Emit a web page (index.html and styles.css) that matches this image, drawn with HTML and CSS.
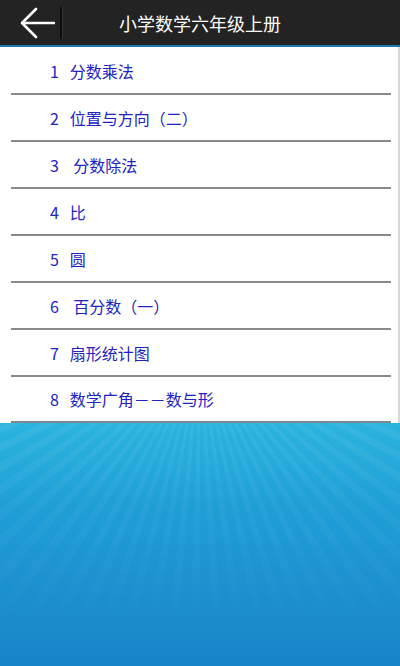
FILE: index.html
```html
<!DOCTYPE html>
<html lang="zh">
<head>
<meta charset="utf-8">
<link rel="stylesheet" href="styles.css">
</head>
<body>
<div class="app">
  <header class="bar">
    <div class="back">
      <svg width="36" height="32" viewBox="0 0 36 32"><path d="M17 2 L3 16 L17 30 M3 16 H35" fill="none" stroke="#fff" stroke-width="2.6" stroke-linecap="round" stroke-linejoin="round"/></svg>
    </div>
    <div class="sep"></div>
    <h1 class="title">小学数学六年级上册</h1>
  </header>
  <ul class="list">
    <li class="item">1   分数乘法</li>
    <li class="item">2   位置与方向（二）</li>
    <li class="item">3    分数除法</li>
    <li class="item">4   比</li>
    <li class="item">5   圆</li>
    <li class="item">6    百分数（一）</li>
    <li class="item">7   扇形统计图</li>
    <li class="item">8   数学广角－－数与形</li>
  </ul>
  <div class="bg"></div>
</div>
</body>
</html>
```

FILE: styles.css
```css
html, body {
  margin: 0;
  padding: 0;
}
body {
  width: 400px;
  height: 666px;
  overflow: hidden;
  font-family: "Noto Sans CJK SC", "Noto Sans", sans-serif;
}
.app {
  display: flex;
  flex-direction: column;
  height: 666px;
}
.bar {
  height: 45px;
  background: #232323;
  border-top: 1px solid #5a5a5a;
  border-bottom: 2px solid #1d78b0;
  display: flex;
  align-items: center;
  position: relative;
  flex: none;
  margin-top: -1px;
}
.back {
  width: 36px;
  height: 32px;
  margin-left: 19px;
  display: flex;
}
.sep {
  width: 2px;
  height: 32px;
  background: #0e0e0e;
  margin-left: 5px;
  border-right: 1px solid #333;
}
.title {
  position: absolute;
  left: 0;
  right: 0;
  top: 0;
  bottom: 0;
  margin: 0;
  display: flex;
  align-items: center;
  justify-content: center;
  color: #fff;
  font-size: 18px;
  font-weight: normal;
  pointer-events: none;
}
.list {
  list-style: none;
  margin: 0;
  padding: 1px 0 0;
  background: #fff;
  border-right: 2px solid #d8d8d8;
  flex: none;
}
.item {
  height: 45px;
  margin: 0 7px 0 11px;
  border-bottom: 2px solid #8a8a8a;
  display: flex;
  align-items: center;
  padding-left: 39px;
  color: #2222c4;
  font-size: 16px;
  white-space: pre;
}
.item:last-child {
  height: 44px;
  border-bottom-color: #7a8a90;
}
.bg {
  flex: 1;
  position: relative;
  overflow: hidden;
  background: linear-gradient(180deg, #2ab4de 0%, #1f9ed6 35%, #1884c8 100%);
}
.bg::before {
  content: "";
  position: absolute;
  inset: 0;
  background: repeating-conic-gradient(from 0deg at 50% -30%, rgba(255,255,255,0.06) 0deg 2deg, rgba(255,255,255,0) 2deg 4.5deg);
  -webkit-mask-image: linear-gradient(180deg, #000 0%, rgba(0,0,0,0.5) 50%, transparent 90%);
  mask-image: linear-gradient(180deg, #000 0%, rgba(0,0,0,0.5) 50%, transparent 90%);
}
```
